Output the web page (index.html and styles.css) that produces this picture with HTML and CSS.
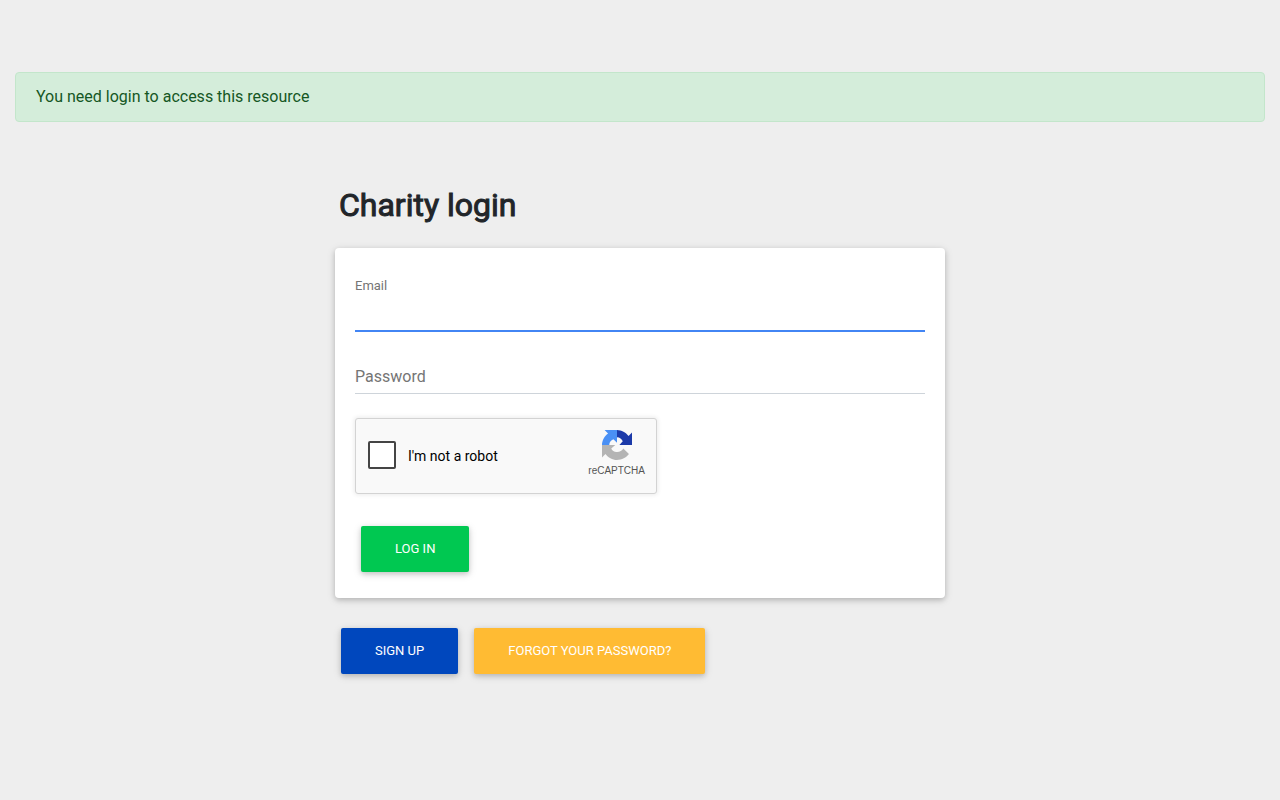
FILE: index.html
```html
<!DOCTYPE html>
<html lang="en">
<head>
    <meta charset="UTF-8">
    <meta name="viewport" content="width=device-width, initial-scale=1.0">
    <title>Charity login</title>
    <link rel="stylesheet" href="styles.css">
</head>
<body>
    <div class="alert" role="alert">You need login to access this resource</div>

    <main class="login">
        <h2>Charity login</h2>

        <form class="card" method="post">
            <div class="field active">
                <input type="email" id="email" name="email" required>
                <label for="email">Email</label>
            </div>
            <div class="field">
                <input type="password" id="password" name="password" required>
                <label for="password">Password</label>
            </div>

            <div class="captcha">
                <input type="checkbox" id="robot" name="robot">
                <label for="robot">I'm not a robot</label>
                <div class="captcha-brand">
                    <svg width="32" height="32" viewBox="0 0 64 64" aria-hidden="true">
                        <path fill="#1c3aa9" d="M62 31.95V7.2l-6.9 6.9C49.6 7 41.3 2.200 32 2v14.300c5.400.2 9.700 3.100 11.500 8.300L36.800 32z"/>
                        <path fill="#4a90f5" d="M32 2H7.200l6.900 6.900C7 14.400 2 22.600 2 32h14.500c.3-5.400 3-9.700 8.300-11.500l7.200 7z"/>
                        <path fill="#b4b4b4" d="M2 32v25l6.900-7C14.400 57.200 22.600 62 32 62c9.700 0 18.400-4.600 23.900-11.800L44.600 38.800c-2.500 4.600-7.600 7.600-13.400 7.200-5-.5-9-3-10.700-7.200l8-6.800z"/>
                    </svg>
                    <span>reCAPTCHA</span>
                </div>
            </div>

            <button type="submit" class="btn btn-success">Log in</button>
        </form>

        <div class="links">
            <a href="/signup" class="btn btn-primary">Sign up</a>
            <a href="/forgot" class="btn btn-warning">Forgot your password?</a>
        </div>
    </main>
</body>
</html>
```
FILE: styles.css
```css
* { box-sizing: border-box; }
body { font-family: Roboto, sans-serif; font-size: 16px; line-height: 24px; margin: 0; padding: 72px 15px 24px; background-color: #eee; color: #212529; }
.alert { padding: 12px 20px; color: #155724; background-color: #d4edda; border: 1px solid #c3e6cb; border-radius: 4px; }

.login { width: 50vw; min-width: 340px; margin: 64px auto 0; padding: 0 15px; }
h2 { margin: 0 4px 24px; font-size: 32px; line-height: 38px; font-weight: 400; -webkit-text-stroke: 1px #212529; }
.card { margin-bottom: 24px; padding: 20px; background: #fff; border-radius: 4px; box-shadow: 0 2px 5px rgba(0,0,0,0.16), 0 2px 10px rgba(0,0,0,0.12); }

.field { position: relative; margin: 24px 0; }
.field input { display: block; width: 100%; height: 39px; padding: 10px 0 6px; font: inherit; color: #495057; background: transparent; border: none; border-bottom: 1px solid #ced4da; outline: none; }
.field label { position: absolute; left: 0; top: 10px; color: #757575; pointer-events: none; }
.field.active label, .field:focus-within label { top: -18px; font-size: 13px; }
.field.active input, .field input:focus { border-bottom-color: #4285f4; box-shadow: 0 1px 0 0 #4285f4; }

.captcha { display: flex; align-items: center; width: 302px; max-width: 100%; height: 76px; margin-bottom: 32px; padding: 0 11px 2px 12px; background: #f9f9f9; border: 1px solid #d3d3d3; border-radius: 3px; box-shadow: 0 0 4px 1px rgba(0,0,0,0.08); }
.captcha input { appearance: none; width: 28px; height: 28px; margin: 0 12px 0 0; background: #fff; border: 2px solid #444; border-radius: 2px; }
.captcha input:checked { background: #4285f4; }
.captcha label { flex: 1; padding-top: 2px; font-size: 14px; line-height: 18px; color: #000; }
.captcha-brand { display: flex; flex-direction: column; align-items: center; font-family: "Liberation Sans", Arial, sans-serif; font-size: 10px; line-height: 20px; color: #555; }

.btn { display: inline-block; margin: 6px; padding: 14px 34px; border: none; border-radius: 2px; color: #fff; font-family: inherit; font-size: 13px; line-height: 18px; text-transform: uppercase; text-decoration: none; cursor: pointer; box-shadow: 0 2px 5px rgba(0,0,0,0.16), 0 2px 10px rgba(0,0,0,0.12); }
.card .btn { display: block; }
.links { display: flex; flex-wrap: wrap; gap: 4px; }
.btn-success { background-color: #00c851; }
.btn-primary { background-color: #0047bd; }
.btn-warning { background-color: #fb3; }
```
